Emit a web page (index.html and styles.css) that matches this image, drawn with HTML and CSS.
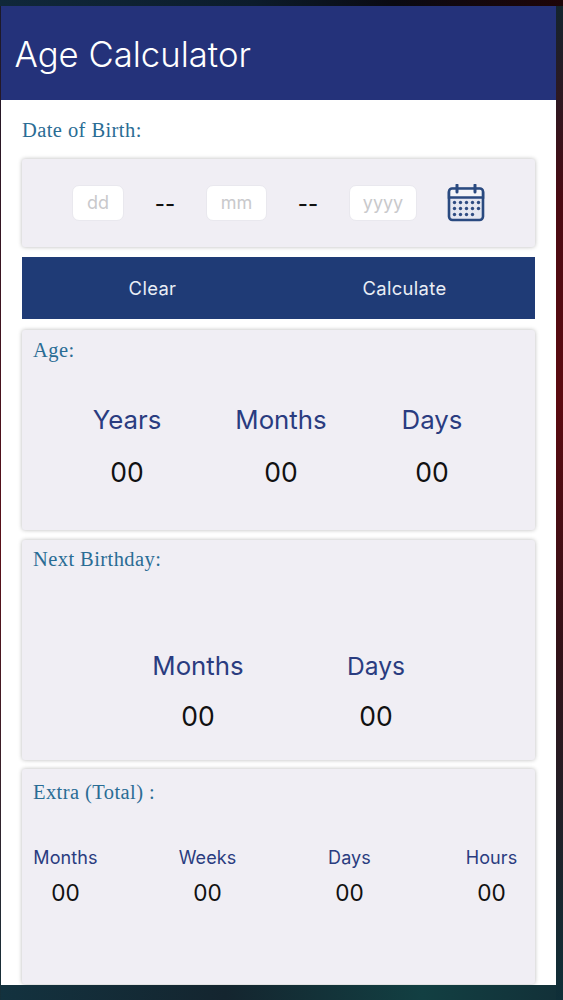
FILE: index.html
```html
<!DOCTYPE html>
<html lang="en">
<head>
<meta charset="utf-8">
<title>Age Calculator</title>
<link rel="stylesheet" href="styles.css">
</head>
<body>
<main class="app">
  <header class="topbar"><h1>Age Calculator</h1></header>
  <div class="content">
    <h2 class="label dob-label">Date of Birth:</h2>
    <section class="card date-card">
      <div class="field f-dd">dd</div>
      <span class="sep">--</span>
      <div class="field f-mm">mm</div>
      <span class="sep">--</span>
      <div class="field f-yy">yyyy</div>
      <svg class="cal" viewBox="0 0 38 38" width="38" height="38" aria-hidden="true">
        <rect x="2" y="5" width="34" height="31" rx="3.5" fill="#e4e7f0" stroke="#2a4a80" stroke-width="2.6"/>
        <path d="M2 7.5a3 3 0 0 1 3-3h28a3 3 0 0 1 3 3v6H2z" fill="#f4f5f8" stroke="#2a4a80" stroke-width="2.6"/>
        <path d="M10 1v7M28 1v7" stroke="#2a4a80" stroke-width="3" stroke-linecap="round"/>
        <g fill="#2f4d82">
          <circle cx="7.5" cy="18.5" r="1.7"/><circle cx="13.5" cy="18.5" r="1.7"/><circle cx="19.5" cy="18.5" r="1.7"/><circle cx="25.5" cy="18.5" r="1.7"/><circle cx="31.5" cy="18.5" r="1.7"/>
          <circle cx="7.5" cy="24.5" r="1.7"/><circle cx="13.5" cy="24.5" r="1.7"/><circle cx="19.5" cy="24.5" r="1.7"/><circle cx="25.5" cy="24.5" r="1.7"/><circle cx="31.5" cy="24.5" r="1.7"/>
          <circle cx="7.5" cy="30.5" r="1.7"/><circle cx="13.5" cy="30.5" r="1.7"/><circle cx="19.5" cy="30.5" r="1.7"/><circle cx="25.5" cy="30.5" r="1.7"/>
        </g>
      </svg>
    </section>
    <div class="actions">
      <button class="btn btn-clear">Clear</button>
      <button class="btn btn-calc">Calculate</button>
    </div>
    <section class="card result age">
      <h2 class="label">Age:</h2>
      <div class="cols cols-age">
        <div class="col"><div class="name">Years</div><div class="val">00</div></div>
        <div class="col"><div class="name">Months</div><div class="val">00</div></div>
        <div class="col"><div class="name">Days</div><div class="val">00</div></div>
      </div>
    </section>
    <section class="card result next">
      <h2 class="label">Next Birthday:</h2>
      <div class="cols cols-next">
        <div class="col"><div class="name">Months</div><div class="val">00</div></div>
        <div class="col"><div class="name name-sm">Days</div><div class="val">00</div></div>
      </div>
    </section>
    <section class="card result extra">
      <h2 class="label">Extra (Total) :</h2>
      <div class="cols cols-extra">
        <div class="col"><div class="name">Months</div><div class="val">00</div></div>
        <div class="col"><div class="name">Weeks</div><div class="val">00</div></div>
        <div class="col"><div class="name">Days</div><div class="val">00</div></div>
        <div class="col"><div class="name">Hours</div><div class="val">00</div></div>
      </div>
    </section>
  </div>
</main>
</body>
</html>
```
FILE: styles.css
```css
* { box-sizing: border-box; }
html, body { margin: 0; height: 1000px; overflow: hidden; }
body {
  background:
    linear-gradient(90deg, #10283a 0%, #0c1c2b 45%, #0a0a12 70%, #1e0508 100%) top / 100% 6px no-repeat,
    linear-gradient(180deg, #12252f 0%, #4a0a12 20%, #5c0a10 40%, #321218 65%, #0f2f38 100%) right / 7px 100% no-repeat,
    linear-gradient(180deg, #1a1a2a 0%, #5a0f18 55%, #15303a 100%) left / 1px 100% no-repeat,
    linear-gradient(90deg, #13323f 0%, #14252f 40%, #123f42 75%, #123038 100%) bottom / 100% 15px no-repeat;
  font-family: "Inter", "Liberation Sans", sans-serif;
  padding: 6px 7px 15px 1px;
}
.app { height: 979px; background: #fff; overflow: hidden; }
.topbar {
  height: 93.5px;
  background: #24327a;
  display: flex;
  align-items: center;
  padding: 2px 13.5px 0;
}
.topbar h1 { margin: 0; color: #fff; font-size: 34.7px; font-weight: 300; letter-spacing: 0; }
.content { padding: 0 21px; }
.label {
  margin: 0;
  font-family: "Liberation Serif", serif;
  font-weight: 400;
  font-size: 20.5px;
  line-height: 24px;
  color: #2a6c94;
  letter-spacing: 0.42px;
}
.dob-label { padding-top: 18px; height: 59px; }
.card {
  background: #f0eef4;
  border-radius: 3px;
  box-shadow: 0 0 4px rgba(0,0,0,.28);
}
.date-card {
  height: 88px;
  display: flex;
  align-items: center;
  padding-left: 50px;
}
.field {
  height: 36px;
  background: #fff;
  border: 1px solid #e9e8ee;
  border-radius: 7px;
  color: #c9c9cc;
  font-size: 18px;
  display: flex;
  align-items: center;
  justify-content: center;
}
.f-dd { width: 52px; }
.f-mm { width: 61px; }
.f-yy { width: 68px; }
.sep { width: 82px; margin-top: 2px; text-align: center; color: #111; font-size: 22px; font-weight: 500; }
.cal { margin-left: 30px; }
.actions {
  margin-top: 10px;
  height: 62px;
  background: #1f3b76;
  display: grid;
  grid-template-columns: 261px 1fr;
}
.btn {
  border: 0;
  background: none;
  color: #e9edf5;
  font: 400 18.4px "Inter", sans-serif;
  letter-spacing: 0.35px;
  padding: 0;
}
.btn-calc { padding-right: 9px; }
.result { margin-top: 11px; padding: 8px 11px 0; overflow: hidden; }
.age { height: 200px; }
.next { height: 220px; margin-top: 10px; padding-top: 7px; }
.extra { height: 215px; margin-top: 9px; padding-top: 11px; }
.col { text-align: center; }
.name { color: #2a3c80; }
.val { color: #111; }
.cols-age { display: grid; grid-template-columns: 188px 120px 182px; margin-top: 42px; }
.cols-age .name, .cols-next .name { font-size: 25.8px; line-height: 32px; }
.cols-age .val, .cols-next .val { font-size: 26.5px; line-height: 32px; margin-top: 20px; }
.cols-next { display: grid; grid-template-columns: 260px 96px; padding-left: 35px; margin-top: 79px; }
.cols-next .name-sm { font-size: 24.6px; }
.cols-next .val { margin-top: 18px; }
.cols-extra { display: flex; margin-top: 42px; justify-content: space-between; }
.cols-extra .col { width: 65px; }
.cols-extra .name { font-size: 18px; line-height: 24px; letter-spacing: 0.1px; }
.cols-extra .val { font-size: 22.6px; line-height: 28px; margin-top: 9px; }
```
